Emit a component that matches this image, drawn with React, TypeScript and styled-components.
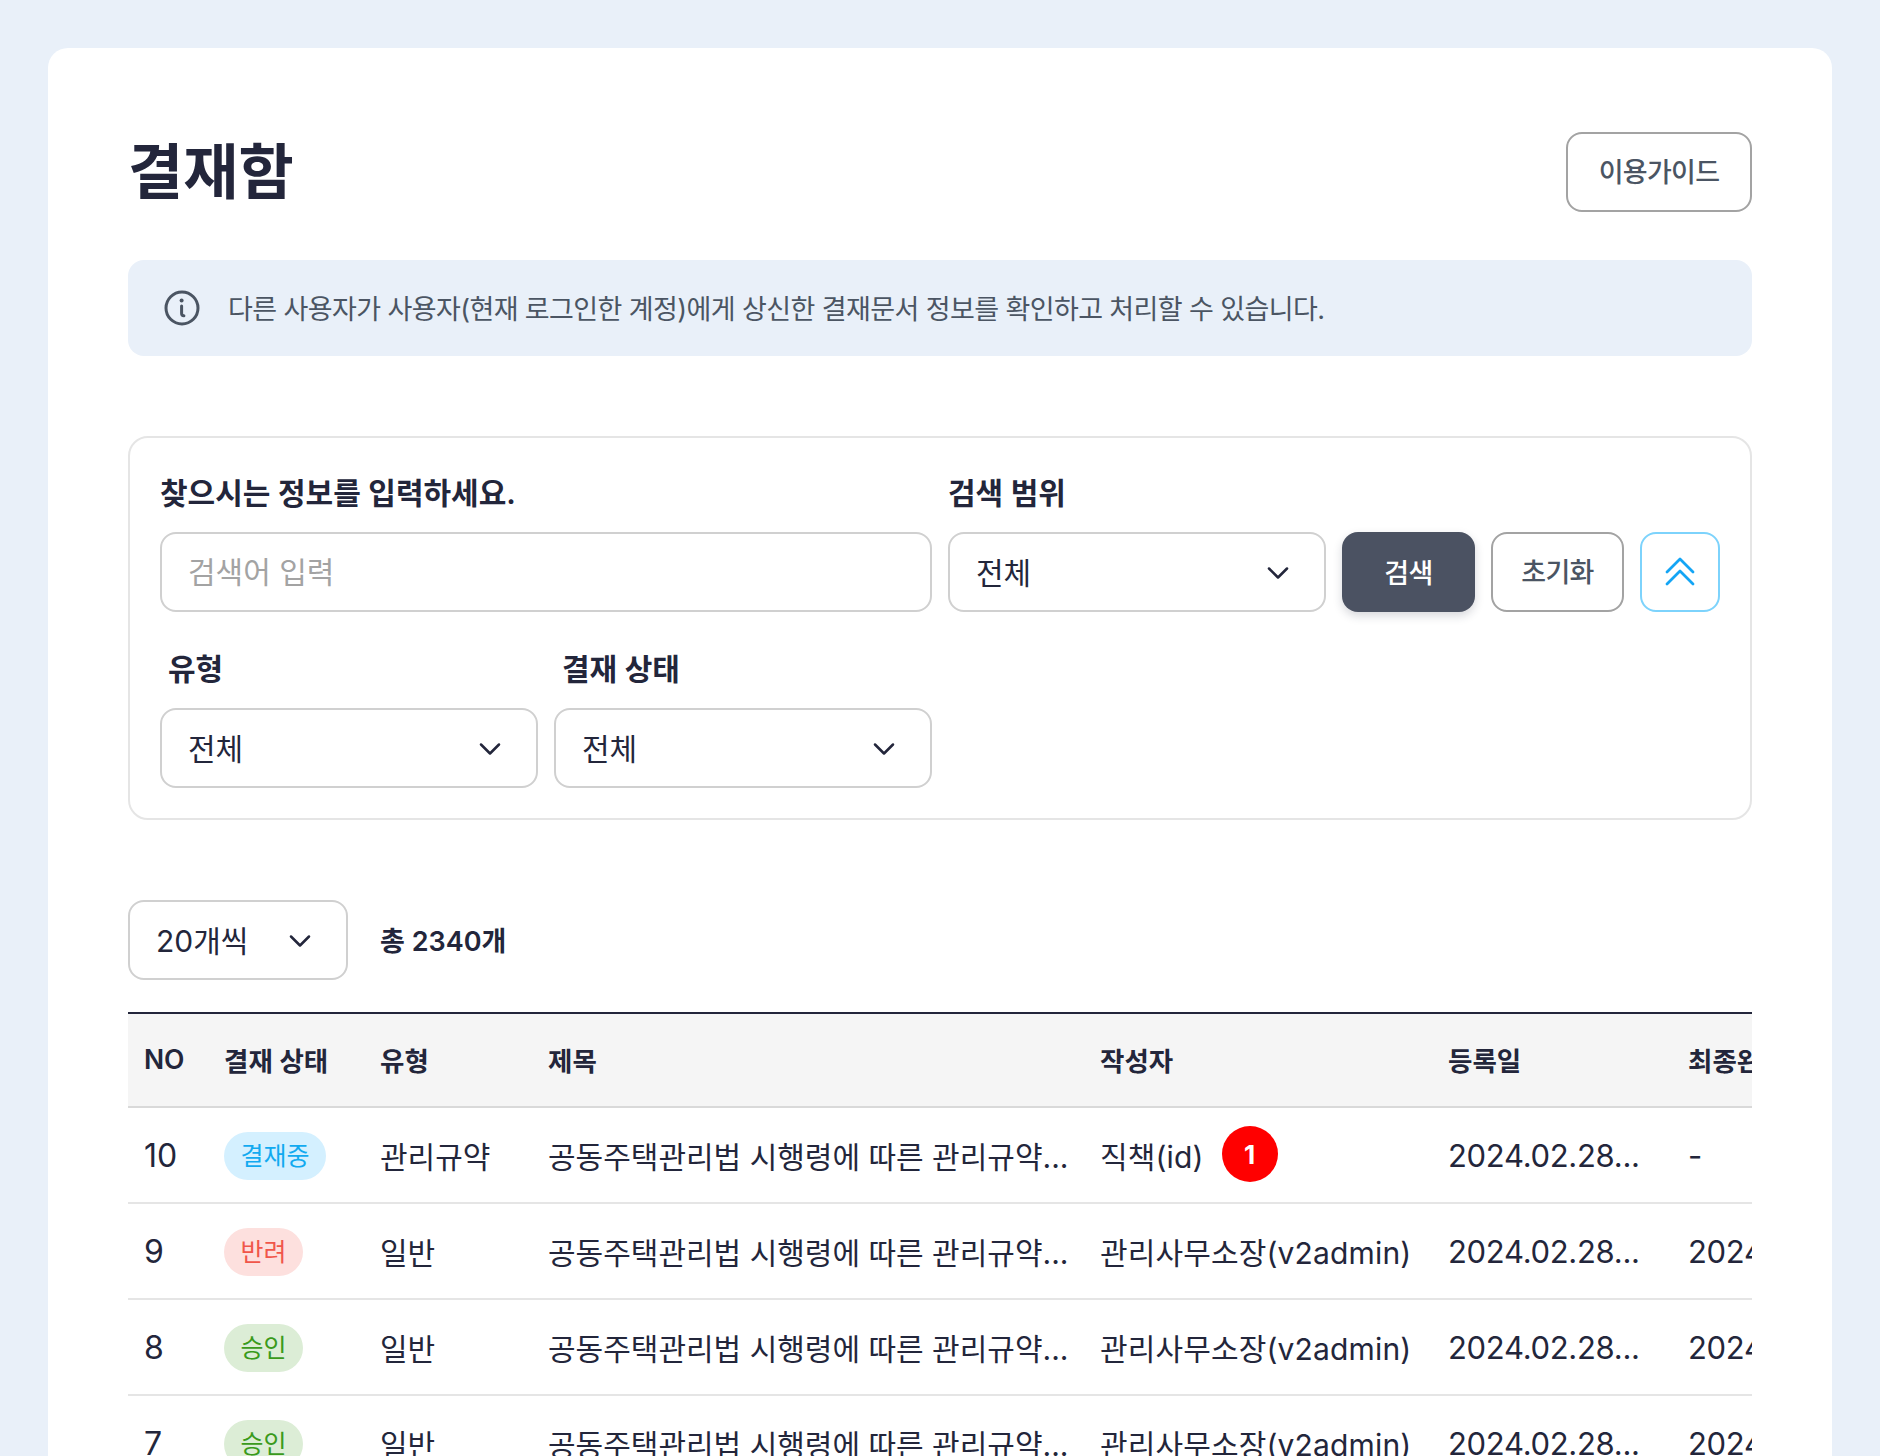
import styled, { createGlobalStyle } from "styled-components";
import { ChevronDown } from "lucide-react";

const GlobalStyle = createGlobalStyle`
  * {
    box-sizing: border-box;
  }
  html, body {
    margin: 0;
    padding: 0;
    height: 100%;
    overflow: hidden;
    background: #e9f0f9;
  }
  body {
    font-family: Inter, "Noto Sans CJK KR", "Noto Sans", sans-serif;
    color: #23263b;
  }
`;

type Tone = "progress" | "rejected" | "approved";

type Row = {
  no: number;
  status: string;
  tone: Tone;
  type: string;
  writer: string;
  count?: number;
  done: string;
};

const SUBJECT = "공동주택관리법 시행령에 따른 관리규약...";
const DATE = "2024.02.28...";

const rows: Row[] = [
  { no: 10, status: "결재중", tone: "progress", type: "관리규약", writer: "직책(id)", count: 1, done: "-" },
  { no: 9, status: "반려", tone: "rejected", type: "일반", writer: "관리사무소장(v2admin)", done: DATE },
  { no: 8, status: "승인", tone: "approved", type: "일반", writer: "관리사무소장(v2admin)", done: DATE },
  { no: 7, status: "승인", tone: "approved", type: "일반", writer: "관리사무소장(v2admin)", done: DATE },
];

const InfoIcon = () => (
  <svg width="40" height="40" viewBox="0 0 40 40" fill="none" stroke="#4b5563" strokeWidth="3" strokeLinecap="round">
    <circle cx="20" cy="20" r="16" />
    <circle cx="19.6" cy="12.6" r="2" fill="#4b5563" stroke="none" />
    <path d="M19.6 18v7.5c0 1.5.8 2.2 2.3 2.2" />
  </svg>
);

const DoubleChevron = () => (
  <svg width="32" height="32" viewBox="0 0 32 32" fill="none" stroke="#14a5f5" strokeWidth="2.8" strokeLinecap="round" strokeLinejoin="round">
    <path d="M3 16 16 3l13 13" />
    <path d="M3 28 16 15l13 13" />
  </svg>
);

const SelectBox = ({ value }: { value: string }) => (
  <Select>
    <span>{value}</span>
    <ChevronDown size={36} strokeWidth={1.7} color="#23263b" />
  </Select>
);

export default function App() {
  return (
    <Page>
      <GlobalStyle />
      <Card>
        <Header>
          <Title>결재함</Title>
          <GuideButton>이용가이드</GuideButton>
        </Header>

        <Notice>
          <InfoIcon />
          <span>다른 사용자가 사용자(현재 로그인한 계정)에게 상신한 결재문서 정보를 확인하고 처리할 수 있습니다.</span>
        </Notice>

        <SearchPanel>
          <SearchGrid>
            <Field $span={2}>
              <Label>찾으시는 정보를 입력하세요.</Label>
              <TextInput placeholder="검색어 입력" readOnly />
            </Field>
            <Field>
              <Label>검색 범위</Label>
              <SelectBox value="전체" />
            </Field>
            <Actions>
              <SearchButton>검색</SearchButton>
              <ResetButton>초기화</ResetButton>
              <ToggleButton>
                <DoubleChevron />
              </ToggleButton>
            </Actions>
            <Field>
              <InsetLabel>유형</InsetLabel>
              <SelectBox value="전체" />
            </Field>
            <Field>
              <InsetLabel>결재 상태</InsetLabel>
              <SelectBox value="전체" />
            </Field>
          </SearchGrid>
        </SearchPanel>

        <ListBar>
          <PageSize>
            <span>20개씩</span>
            <ChevronDown size={36} strokeWidth={1.7} color="#23263b" />
          </PageSize>
          <Total>총 2340개</Total>
        </ListBar>

        <TableWrap>
          <Table>
            <colgroup>
              <col style={{ width: 80 }} />
              <col style={{ width: 156 }} />
              <col style={{ width: 168 }} />
              <col style={{ width: 552 }} />
              <col style={{ width: 348 }} />
              <col style={{ width: 240 }} />
              <col style={{ width: 240 }} />
            </colgroup>
            <thead>
              <tr>
                <th>NO</th>
                <th>결재 상태</th>
                <th>유형</th>
                <th>제목</th>
                <th>작성자</th>
                <th>등록일</th>
                <th>최종완료일</th>
              </tr>
            </thead>
            <tbody>
              {rows.map((row) => (
                <tr key={row.no}>
                  <td>{row.no}</td>
                  <td>
                    <Badge $tone={row.tone}>{row.status}</Badge>
                  </td>
                  <td>{row.type}</td>
                  <td>{SUBJECT}</td>
                  <td>
                    <Writer>
                      {row.writer}
                      {row.count ? <Count>{row.count}</Count> : null}
                    </Writer>
                  </td>
                  <td>{DATE}</td>
                  <td>{row.done}</td>
                </tr>
              ))}
            </tbody>
          </Table>
        </TableWrap>
      </Card>
    </Page>
  );
}

const toneColors: Record<Tone, { bg: string; fg: string }> = {
  progress: { bg: "#d4f0ff", fg: "#12aaf0" },
  rejected: { bg: "#fde0de", fg: "#f0564a" },
  approved: { bg: "#dcedd6", fg: "#3a9a1c" },
};

const Page = styled.div`
  height: 100vh;
  overflow: hidden;
  padding: 48px 48px 0;
`;

const Card = styled.main`
  background: #ffffff;
  border-radius: 20px;
  padding: 84px 80px 80px;
`;

const Header = styled.header`
  display: flex;
  justify-content: space-between;
  align-items: flex-start;
  height: 80px;
`;

const Title = styled.h1`
  margin: 0;
  font-size: 60px;
  line-height: 80px;
  font-weight: 700;
  color: #23263b;
`;

const OutlineButton = styled.button`
  font-family: inherit;
  background: #ffffff;
  border: 2px solid #a3a3a3;
  border-radius: 16px;
  height: 80px;
  padding: 0 0 3px;
  font-size: 27px;
  font-weight: 500;
  letter-spacing: -0.7px;
  color: #4b5563;
`;

const GuideButton = styled(OutlineButton)`
  width: 186px;
`;

const Notice = styled.div`
  display: flex;
  align-items: center;
  gap: 26px;
  height: 96px;
  margin-top: 48px;
  padding: 0 34px;
  border-radius: 16px;
  background: #e9f0f9;
  font-size: 27px;
  letter-spacing: -0.6px;
  color: #4b5563;

  span {
    padding-bottom: 2px;
  }
`;

const SearchPanel = styled.section`
  margin-top: 80px;
  border: 2px solid #e5e5e5;
  border-radius: 20px;
  padding: 35px 30px 30px;
`;

const SearchGrid = styled.div`
  display: grid;
  grid-template-columns: 378px 378px 378px 1fr;
  column-gap: 16px;
  row-gap: 37px;
`;

const Field = styled.div<{ $span?: number }>`
  grid-column: span ${(p) => p.$span ?? 1};
  display: flex;
  flex-direction: column;
  gap: 19px;
`;

const Label = styled.label`
  font-size: 30px;
  line-height: 40px;
  font-weight: 600;
  color: #23263b;
`;

const InsetLabel = styled(Label)`
  padding-left: 8px;
`;

const controlBase = `
  height: 80px;
  border: 2px solid #d0d0d0;
  border-radius: 16px;
  background: #ffffff;
  font-family: inherit;
  font-size: 30px;
  color: #23263b;
`;

const TextInput = styled.input`
  ${controlBase}
  width: 100%;
  padding: 0 26px;
  outline: none;
  &::placeholder {
    color: #a3a3a3;
  }
`;

const Select = styled.div`
  ${controlBase}
  display: flex;
  align-items: center;
  justify-content: space-between;
  padding: 0 28px 0 26px;

  span {
    padding-bottom: 2px;
  }

  svg {
    margin-top: 2px;
  }
`;

const PageSize = styled(Select)`
  width: 220px;
`;

const Actions = styled.div`
  display: flex;
  align-items: flex-end;
  gap: 16px;
`;

const SearchButton = styled.button`
  width: 133px;
  height: 80px;
  padding: 0 0 2px;
  border: none;
  border-radius: 16px;
  background: #4b5262;
  box-shadow: 0 4px 10px rgba(35, 38, 59, 0.18);
  font-family: inherit;
  font-size: 27px;
  font-weight: 500;
  letter-spacing: -0.7px;
  color: #ffffff;
`;

const ResetButton = styled(OutlineButton)`
  width: 133px;
`;

const ToggleButton = styled.button`
  display: flex;
  align-items: center;
  justify-content: center;
  width: 80px;
  height: 80px;
  padding: 0;
  border: 2px solid #7dd3fc;
  border-radius: 16px;
  background: #ffffff;
`;

const ListBar = styled.div`
  display: flex;
  align-items: center;
  gap: 32px;
  margin-top: 80px;
`;

const Total = styled.strong`
  padding-bottom: 2px;
  font-size: 27px;
  font-weight: 600;
  color: #23263b;
`;

const TableWrap = styled.div`
  margin-top: 32px;
  overflow: hidden;
`;

const Table = styled.table`
  width: 1784px;
  table-layout: fixed;
  border-collapse: collapse;
  border-top: 2px solid #23263b;

  th {
    height: 94px;
    padding: 0 16px 2px;
    background: #f5f5f5;
    border-bottom: 2px solid #d9d9d9;
    font-size: 26.5px;
    font-weight: 600;
    text-align: left;
    white-space: nowrap;
    overflow: hidden;
    color: #23263b;
  }

  td {
    height: 96px;
    padding: 0 16px;
    border-bottom: 2px solid #e5e5e5;
    font-size: 30px;
    white-space: nowrap;
    overflow: hidden;
    color: #23263b;
  }

  td:nth-child(1) {
    font-size: 32px;
  }

  td:nth-child(5) {
    letter-spacing: 0.15px;
  }

  td:nth-child(6),
  td:nth-child(7) {
    font-size: 31px;
    letter-spacing: -0.3px;
  }
`;

const Badge = styled.span<{ $tone: Tone }>`
  display: inline-block;
  height: 48px;
  margin-top: 2px;
  padding: 0 16.5px;
  border-radius: 24px;
  font-size: 25px;
  line-height: 48px;
  background: ${(p) => toneColors[p.$tone].bg};
  color: ${(p) => toneColors[p.$tone].fg};
`;

const Writer = styled.div`
  display: flex;
  align-items: center;
  gap: 19px;
`;

const Count = styled.span`
  display: flex;
  align-items: center;
  justify-content: center;
  width: 56px;
  height: 56px;
  margin-top: -2px;
  margin-left: -1px;
  border-radius: 50%;
  background: #ff0000;
  font-size: 26px;
  font-weight: 700;
  color: #ffffff;
`;
